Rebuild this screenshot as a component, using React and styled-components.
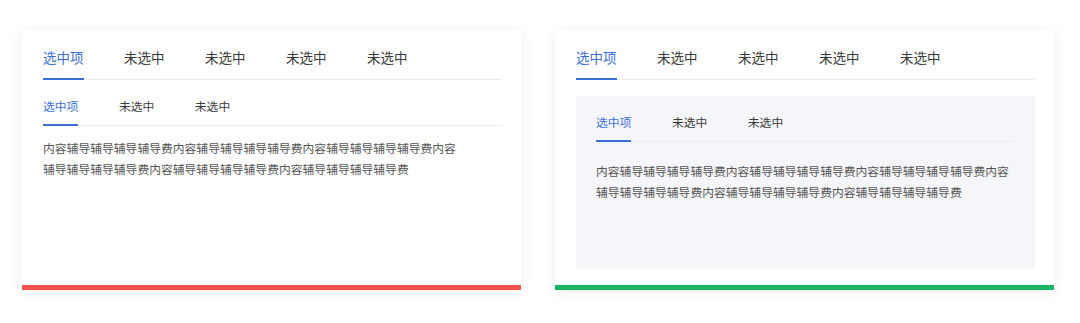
import React from "react";
import styled, { createGlobalStyle } from "styled-components";

const GlobalStyle = createGlobalStyle`
  html, body {
    margin: 0;
    padding: 0;
    background: #ffffff;
    font-family: "Noto Sans CJK SC", "Noto Sans", sans-serif;
  }
`;

const Page = styled.div`
  display: flex;
  gap: 34px;
  padding: 30px 0 0 22px;
  width: 1080px;
  height: 323px;
  box-sizing: border-box;
`;

const Card = styled.div`
  width: 499px;
  height: 260px;
  box-sizing: border-box;
  background: #fff;
  padding: 17px 19px 16px 21px;
  border-bottom: 5px solid ${(p) => p.$accent};
  box-shadow: 0 2px 14px rgba(0, 0, 0, 0.07);
  display: flex;
  flex-direction: column;
`;

const TabBar = styled.div`
  display: flex;
  gap: 40.5px;
  border-bottom: 1px solid #ececf0;
`;

const Tab = styled.div`
  font-size: ${(p) => (p.$small ? "11.8px" : "13.5px")};
  line-height: ${(p) => (p.$small ? "20px" : "21px")};
  padding-bottom: ${(p) => (p.$small ? "8px" : "10px")};
  margin-bottom: -1px;
  color: ${(p) => (p.$active ? "#3b6fd6" : "#3a3a3a")};
  border-bottom: 2px solid ${(p) => (p.$active ? "#3b6fd6" : "transparent")};
`;

const Panel = styled.div`
  flex: 1;
  margin-top: 16px;
  padding: ${(p) => (p.$filled ? "16px 20px" : "0")};
  background: ${(p) => (p.$filled ? "#f5f6f9" : "transparent")};
`;

const Content = styled.p`
  margin: ${(p) => (p.$filled ? "18px" : "11px")} 0 0;
  max-width: 418px;
  font-size: 11.8px;
  line-height: 21px;
  color: #555;
`;

const mainTabs = ["选中项", "未选中", "未选中", "未选中", "未选中"];
const subTabs = ["选中项", "未选中", "未选中"];
const text = "内容辅导辅导辅导辅导费".repeat(6);

const TabCard = ({ accent, filled }) => (
  <Card $accent={accent}>
    <TabBar>
      {mainTabs.map((t, i) => (
        <Tab key={i} $active={i === 0}>
          {t}
        </Tab>
      ))}
    </TabBar>
    <Panel $filled={filled}>
      <TabBar $small>
        {subTabs.map((t, i) => (
          <Tab key={i} $small $active={i === 0}>
            {t}
          </Tab>
        ))}
      </TabBar>
      <Content $filled={filled}>{text}</Content>
    </Panel>
  </Card>
);

export default function App() {
  return (
    <>
      <GlobalStyle />
      <Page>
        <TabCard accent="#f0544c" />
        <TabCard accent="#19b464" filled />
      </Page>
    </>
  );
}
